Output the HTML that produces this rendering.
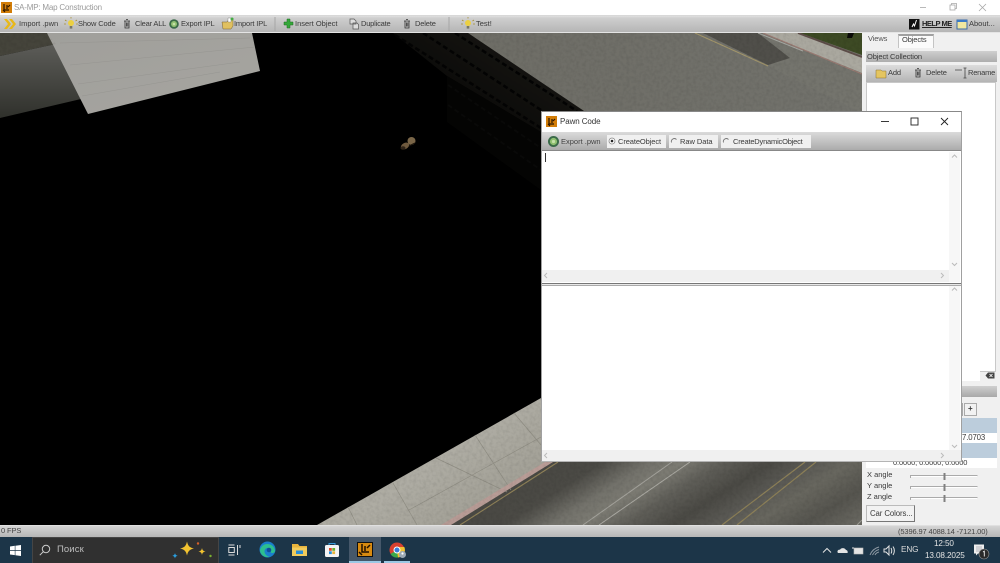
<!DOCTYPE html>
<html><head><meta charset="utf-8"><title>SA-MP: Map Construction</title>
<style>
html,body{margin:0;padding:0;width:1000px;height:563px;overflow:hidden;background:#000}
*{box-sizing:border-box}
body{font-family:"Liberation Sans","DejaVu Sans",sans-serif;font-size:7.5px;color:#333;position:relative}
.a{position:absolute}
.t{position:absolute;white-space:nowrap;line-height:10px;color:#3a3a3a;filter:blur(.3px);letter-spacing:-.13px}
.bar{background:linear-gradient(#e0e0e0 0,#cfcfcf 12%,#b5b5b5 100%)}
svg{position:absolute;overflow:visible;filter:blur(.3px)}
</style></head><body>

<!-- 3D scene -->
<svg style="left:0;top:33px" width="862" height="492" viewBox="0 33 862 492">
<defs>
<linearGradient id="road" gradientUnits="userSpaceOnUse" x1="465" y1="524" x2="579.5" y2="705">
<stop offset="0" stop-color="#4a4944"/><stop offset=".1" stop-color="#4b4a45"/><stop offset=".22" stop-color="#73726b"/><stop offset=".3" stop-color="#7c7b73"/><stop offset=".4" stop-color="#5f5e58"/><stop offset=".52" stop-color="#4a4944"/><stop offset=".62" stop-color="#5a5954"/><stop offset=".72" stop-color="#68675f"/><stop offset=".85" stop-color="#55544e"/><stop offset="1" stop-color="#6d6c65"/>
</linearGradient>
<linearGradient id="side" gradientUnits="userSpaceOnUse" x1="400" y1="400" x2="480" y2="520">
<stop offset="0" stop-color="#a8a69c"/><stop offset=".5" stop-color="#aeaca3"/><stop offset="1" stop-color="#a09e94"/>
</linearGradient>
<linearGradient id="sheet" x1="0" y1="0" x2="1" y2="1"><stop offset="0" stop-color="#a09f9b"/><stop offset="1" stop-color="#a6a5a0"/></linearGradient>
<linearGradient id="wall" x1="0" y1="0" x2="0" y2="1"><stop offset="0" stop-color="#5c5c58"/><stop offset="1" stop-color="#2f302b"/></linearGradient>
<linearGradient id="roof" x1="0" y1="0" x2="1" y2="0"><stop offset="0" stop-color="#6e6d66"/><stop offset="1" stop-color="#72726c"/></linearGradient>
<linearGradient id="fac" gradientUnits="userSpaceOnUse" x1="470" y1="33" x2="425" y2="105"><stop offset="0" stop-color="#141310"/><stop offset="1" stop-color="#070706"/></linearGradient>
<filter id="n" x="0" y="0" width="100%" height="100%"><feTurbulence type="fractalNoise" baseFrequency=".3" numOctaves="2" seed="3"/><feColorMatrix values="0 0 0 0 0  0 0 0 0 0  0 0 0 0 0  1.1 0 0 0 -.42"/></filter>
<clipPath id="tex"><polygon points="468,33 862,33 862,115 590,115"/><polygon points="317,525 541,398 541,462 862,462 862,525"/><polygon points="0,33 47,33 56,44 0,56"/></clipPath>
</defs>
<rect x="0" y="33" width="862" height="492" fill="#000"/>
<!-- top-left -->
<polygon points="0,33 47,33 56,44 0,56" fill="#45443b"/>
<polygon points="0,56 56,44 81,99 0,118" fill="url(#wall)"/>
<polygon points="47,33 252,33 260,71 88,114" fill="url(#sheet)"/>
<g stroke="#969591" stroke-width=".5" fill="none"><path d="M60 43 250 38M70 65 255 47M78 84 240 62M82 96 220 72"/></g>
<!-- building facade -->
<polygon points="393,33 468,33 590,113 541,113 541,132 447,76" fill="url(#fac)"/>
<polygon points="447,76 541,132 541,190 447,122" fill="#040403"/>
<g stroke="#030303" stroke-width="2.500" stroke-dasharray="5 3" fill="none">
<path d="M455 33 577 111"/><path d="M423 33 541 110"/><path d="M395 35 541 128"/>
</g>
<g stroke="#090908" stroke-width="2" stroke-dasharray="5 3" fill="none"><path d="M448 85 541 148"/><path d="M448 105 541 170"/></g>
<!-- roof -->
<polygon points="468,33 862,33 862,115 590,115" fill="url(#roof)"/>
<polygon points="758,33 763,33 862,73 862,113 768,66" fill="#74746d"/>
<polygon points="703,33 758,33 790,58 768,65" fill="#504f4a"/>
<path d="M695 33 768 66" stroke="#a3966a" stroke-width="1" fill="none"/>
<path d="M758 33 803 51" stroke="#a6a6a0" stroke-width="1" fill="none"/>
<polygon points="763,33 798,33 862,56 862,73" fill="#aaa89f"/>
<path d="M763 33 862 74" stroke="#9a7a72" stroke-width="1.200"/>
<polygon points="800,33 862,33 862,55" fill="#3d4a24"/>
<path d="M798 33 862 57" stroke="#5d4d48" stroke-width="2"/>
<polygon points="848,33 854,33 852,38 847,38" fill="#0b0b08"/>
<!-- object -->
<g><ellipse cx="405" cy="146" rx="4.500" ry="3" fill="#6f5a3e" transform="rotate(-30 405 146)"/><ellipse cx="411.500" cy="141" rx="4" ry="4" fill="#7a6648"/><ellipse cx="403" cy="148" rx="2.500" ry="1.800" fill="#2f2418"/><path d="M409 146l6-3" stroke="#1a140c" stroke-width="1"/></g>
<!-- road -->
<polygon points="450,525 862,525 862,400 541,400 541,462 551,462" fill="url(#road)"/>
<polygon points="541,398 551,398 551,462 450,525 317,525" fill="url(#side)"/>
<g stroke="#8f8d83" stroke-width=".7" fill="none"><path d="M348 507 357,525M393 483 417 525M436 458 507 492M475 435 511 490M514 413 541 445M409 510 541 437"/></g>
<polygon points="441,525 451,525 553,462 545,462" fill="#b89c96"/>
<path d="M460 525 558 462" stroke="#8f8158" stroke-width="1.100"/>
<path d="M583 525 672 462" stroke="#a4a39c" stroke-width="1"/>
<path d="M599 525 690 462" stroke="#aaa9a2" stroke-width="1"/>
<path d="M722 525 805 462" stroke="#8d8058" stroke-width="1.200"/>
<path d="M737 525 816 462" stroke="#8d8058" stroke-width="1.200"/>
<path d="M857 525 862 520" stroke="#9c9b94" stroke-width="1"/>
<g clip-path="url(#tex)"><rect x="0" y="33" width="862" height="492" filter="url(#n)" opacity=".13"/></g>
</svg>

<!-- title bar -->
<div class="a" style="left:0;top:0;width:1000px;height:15px;background:#fff"></div>
<svg style="left:1px;top:2px" width="11" height="11" viewBox="0 0 11 11"><rect width="11" height="11" fill="#d27d08"/><path d="M3 2v6h5M6 3v4M2 8l2 2M7 5l2-2" stroke="#2a1500" stroke-width="1.200" fill="none"/></svg>
<div class="t" style="left:14px;top:3px;font-size:8px;color:#9a9a9a;letter-spacing:-.2px">SA-MP: Map Construction</div>
<svg style="left:920px;top:0" width="80" height="15" viewBox="0 0 80 15" fill="none" stroke="#a8a8a8" stroke-width=".8"><path d="M0 7.500h6"/><rect x="30" y="5" width="5" height="5"/><path d="M31.500 5V3.500h5v5H35"/><path d="M59 4l7 7M66 4l-7 7"/></svg>

<!-- main toolbar -->
<div class="a bar" style="left:0;top:15px;width:1000px;height:18px;border-top:1px solid #d8d8d8;border-bottom:1px solid #e4e4e4"></div>
<svg style="left:0;top:16px" width="520" height="16" viewBox="0 0 520 16">
<path d="M4 3l4 5-4 5h3l4-5-4-5zM9 3l4 5-4 5h3l4-5-4-5z" fill="#e8b818"/>
<circle cx="71" cy="7" r="3" fill="#ecd040"/><rect x="69.700" y="10" width="2.600" height="2.600" fill="#776"/><path d="M65 4l1.500 1M77 4l-1.500 1M64 8h2M76 8h2M71 1v1.500" stroke="#a89030" stroke-width=".8"/>
<g fill="none" stroke="#333" stroke-width=".8"><path d="M124 5h6M125 5v7h4V5M126 3.500h2M126.400 6.500v4M127.800 6.500v4"/></g>
<circle cx="174" cy="8" r="4.800" fill="#3a6a48"/><circle cx="174" cy="8" r="3" fill="#8fc070"/><circle cx="174" cy="8" r="1.300" fill="#c4e0a8"/>
<path d="M222 6h5l1-1.500h3l2-2.500v8l-2 3h-8z" fill="#e0c060" stroke="#776030" stroke-width=".5"/><path d="M228 2h3v4h-3z" fill="#fff" stroke="#777" stroke-width=".4"/><circle cx="232" cy="3" r="1.500" fill="#4a4"/>
<rect x="274.500" y="1" width="1" height="14" fill="#a6a6a6"/>
<path d="M287 3h3v3h3v3h-3v3h-3V9h-3V6h3z" fill="#35a83a" stroke="#1e6a20" stroke-width=".5"/>
<path d="M350 3h4l2 2v3h-6z M353 7h4l1.500 1.500V13H353z" fill="#ddd" stroke="#555" stroke-width=".7"/>
<g fill="none" stroke="#333" stroke-width=".8"><path d="M404 5h6M405 5v7h4V5M406 3.500h2M406.400 6.500v4M407.800 6.500v4"/></g>
<rect x="448.500" y="1" width="1" height="14" fill="#a6a6a6"/>
<circle cx="468" cy="7" r="3" fill="#ecd040"/><rect x="466.700" y="10" width="2.600" height="2.600" fill="#776"/><path d="M462 4l1.500 1M474 4l-1.500 1M461 8h2M473 8h2M468 1v1.500" stroke="#a89030" stroke-width=".8"/>
</svg>
<div class="t" style="left:19px;top:19px;letter-spacing:0">Import .pwn</div>
<div class="t" style="left:78px;top:19px">Show Code</div>
<div class="t" style="left:135px;top:19px;letter-spacing:-.2px">Clear ALL</div>
<div class="t" style="left:181px;top:19px;letter-spacing:-.15px">Export IPL</div>
<div class="t" style="left:234px;top:19px;letter-spacing:-.15px">Import IPL</div>
<div class="t" style="left:295px;top:19px;letter-spacing:0">Insert Object</div>
<div class="t" style="left:361px;top:19px;letter-spacing:-.2px">Duplicate</div>
<div class="t" style="left:415px;top:19px;letter-spacing:-.15px">Delete</div>
<div class="t" style="left:476px;top:19px;letter-spacing:0">Test!</div>
<svg style="left:909px;top:18px" width="60" height="13" viewBox="0 0 60 13"><rect x="0" y="1" width="10.500" height="10.500" fill="#111"/><path d="M3 9l1.500-3 1 2 2-6" stroke="#fff" stroke-width="1" fill="none"/><rect x="48" y="2" width="10" height="9" fill="#f0e8a0" stroke="#3a6aa8"/><rect x="48" y="2" width="10" height="2" fill="#3a7ac8"/></svg>
<div class="t" style="left:922px;top:19px;font-weight:bold;text-decoration:underline;color:#222;letter-spacing:-.5px">HELP ME</div>
<div class="t" style="left:969px;top:19px;letter-spacing:0">About...</div>

<!-- right panel -->
<div class="a" style="left:862px;top:33px;width:138px;height:492px;background:#f0f0f0"></div>
<div class="t" style="left:868px;top:34px;color:#555">Views</div>
<div class="a" style="left:898px;top:34px;width:36px;height:14px;background:#fbfbfb;border:1px solid #c4c4c4;border-top:2px solid #a0a0a0;border-bottom:0"></div>
<div class="t" style="left:902px;top:35px">Objects</div>
<div class="a" style="left:866px;top:51px;width:131px;height:11px;background:linear-gradient(#cfcfcf,#adadad)"></div>
<div class="t" style="left:867px;top:52px;letter-spacing:-.1px">Object Collection</div>
<div class="a" style="left:866px;top:65px;width:131px;height:17px;background:linear-gradient(#dcdcdc,#b4b4b4)"></div>
<svg style="left:875px;top:67px" width="115" height="13" viewBox="0 0 115 13"><path d="M1 3h5l1 1h4v7H1z" fill="#e4c560" stroke="#8a7030" stroke-width=".5"/><g fill="none" stroke="#333" stroke-width=".8"><path d="M40 3h6M41 3v7h4V3M42 1.500h2M42.400 4.500v4M43.800 4.500v4"/></g><path d="M80 3h7M90 1v10M88.500 1h3M88.500 11h3" stroke="#444" stroke-width=".8" fill="none"/></svg>
<div class="t" style="left:888px;top:68px">Add</div>
<div class="t" style="left:926px;top:68px;letter-spacing:-.15px">Delete</div>
<div class="t" style="left:968px;top:68px;letter-spacing:-.2px">Rename</div>
<div class="a" style="left:866px;top:82px;width:130px;height:290px;background:#fff;border:1px solid #c8c8c8"></div>
<div class="a" style="left:866px;top:370px;width:114px;height:11px;background:#fff"></div>
<svg style="left:985px;top:372px" width="10" height="7" viewBox="0 0 10 7"><path d="M3 .5h6.500v6H3L.5 3.500z" fill="#444"/><path d="M4.500 2l3 3M7.500 2l-3 3" stroke="#fff" stroke-width=".8"/></svg>
<div class="a" style="left:866px;top:386px;width:131px;height:11px;background:linear-gradient(#cfcfcf,#a8a8a8)"></div>
<div class="a" style="left:950px;top:403px;width:13px;height:13px;background:#e4e4e4;border:1px solid #aaa"></div>
<div class="a" style="left:964px;top:403px;width:13px;height:13px;background:#f2f2f2;border:1px solid #aaa"></div>
<div class="t" style="left:968px;top:404px;font-weight:bold;font-size:8px">+</div>
<div class="a" style="left:866px;top:418px;width:131px;height:15px;background:#bccddc"></div>
<div class="a" style="left:866px;top:433px;width:131px;height:10px;background:#fff"></div>
<div class="a" style="left:866px;top:443px;width:131px;height:15px;background:#bccddc"></div>
<div class="a" style="left:866px;top:458px;width:131px;height:10px;background:#fff"></div>
<div class="t" style="left:962px;top:433px;font-size:7.800px">7.0703</div>
<div class="t" style="left:893px;top:458px;font-size:7.500px">0.0000, 0.0000, 0.0000</div>
<div class="t" style="left:867px;top:470px;letter-spacing:0">X angle</div>
<div class="t" style="left:867px;top:481px;letter-spacing:0">Y angle</div>
<div class="t" style="left:867px;top:492px;letter-spacing:0">Z angle</div>
<svg style="left:910px;top:472px" width="68" height="32" viewBox="0 0 68 32" fill="none"><g stroke="#aaa" stroke-width="1"><path d="M.5 6V3.500h67M.5 17v-2.500h67M.5 28v-2.500h67"/></g><path d="M1 4.500h66M1 15.500h66M1 26.500h66" stroke="#fff"/><g stroke="#808080" stroke-width="2"><path d="M34.500 1v7M34.500 12v7M34.500 23v7"/></g></svg>
<div class="a" style="left:866px;top:505px;width:49px;height:17px;background:#f2f2f2;border:1px solid #bbb;border-bottom-color:#777;border-right-color:#777"></div>
<div class="t" style="left:870px;top:509px;font-size:7.800px;letter-spacing:-.1px">Car Colors...</div>

<!-- status bar -->
<div class="a" style="left:0;top:525px;width:1000px;height:12px;background:linear-gradient(#d4d4d4,#b6b6b6);border-top:1px solid #e0e0e0"></div>
<div class="t" style="left:1px;top:526px;color:#444">0 FPS</div>
<div class="t" style="left:898px;top:527px;color:#444">(5396.97 4088.14 -7121.00)</div>

<!-- dialog -->
<div class="a" style="left:541px;top:111px;width:421px;height:351px;background:#fff;border:1px solid #a0a0a0;border-top-color:#888;border-bottom-color:#b4b4b4"></div>
<svg style="left:546px;top:116px" width="11" height="11" viewBox="0 0 11 11"><rect width="11" height="11" fill="#d27d08"/><path d="M3 2v6h5M6 3v4M2 8l2 2M7 5l2-2" stroke="#2a1500" stroke-width="1.200" fill="none"/></svg>
<div class="t" style="left:560px;top:117px;font-size:8px;color:#333;letter-spacing:-.1px">Pawn Code</div>
<svg style="left:875px;top:115px" width="80" height="14" viewBox="0 0 80 14" fill="none" stroke="#222" stroke-width=".9"><path d="M6 6.500h8"/><rect x="36" y="3" width="7" height="7"/><path d="M66 3l7 7M73 3l-7 7"/></svg>
<div class="a" style="left:542px;top:132px;width:419px;height:19px;background:linear-gradient(#dadada,#ababab);border-bottom:1px solid #888"></div>
<svg style="left:547px;top:135px" width="13" height="13" viewBox="0 0 13 13"><circle cx="6.500" cy="6.500" r="5.500" fill="#3a6a48"/><circle cx="6.500" cy="6.500" r="3.600" fill="#8fc070"/><circle cx="6.500" cy="6.500" r="1.600" fill="#c4e0a8"/></svg>
<div class="t" style="left:561px;top:137px;color:#444;letter-spacing:0">Export .pwn</div>
<div class="a" style="left:607px;top:135px;width:59px;height:13px;background:#f0f0f0"></div>
<div class="a" style="left:669px;top:135px;width:49px;height:13px;background:#f0f0f0"></div>
<div class="a" style="left:721px;top:135px;width:90px;height:13px;background:#f0f0f0"></div>
<svg style="left:607px;top:135px" width="130" height="13" viewBox="0 0 130 13" fill="none"><circle cx="5" cy="6" r="3" fill="#fff" stroke="#888" stroke-width=".8"/><circle cx="5" cy="6" r="1.300" fill="#222"/><path d="M64.500 7.500a3 3 0 0 1 5-3M116.500 7.500a3 3 0 0 1 5-3" stroke="#777" stroke-width=".9"/></svg>
<div class="t" style="left:618px;top:137px;letter-spacing:-.1px">CreateObject</div>
<div class="t" style="left:680px;top:137px;letter-spacing:-.05px">Raw Data</div>
<div class="t" style="left:733px;top:137px;letter-spacing:-.2px">CreateDynamicObject</div>
<div class="a" style="left:545px;top:153px;width:1px;height:9px;background:#333"></div>
<div class="a" style="left:542px;top:270px;width:407px;height:12px;background:#f0f0f0"></div>
<div class="a" style="left:949px;top:152px;width:11px;height:130px;background:#f7f7f7"></div>
<div class="a" style="left:542px;top:283px;width:419px;height:3px;background:#e8e8e8;border-top:1px solid #777;border-bottom:1px solid #aaa"></div>
<div class="a" style="left:949px;top:286px;width:11px;height:164px;background:#f7f7f7"></div>
<div class="a" style="left:542px;top:450px;width:419px;height:11px;background:#f0f0f0"></div>
<svg style="left:542px;top:152px" width="420" height="310" viewBox="0 0 420 310" fill="none" stroke="#bbb" stroke-width="1"><path d="M410 5.500l2.500-2.500 2.500 2.500M410 111l2.500 2.500 2.500-2.500M5 121l-2.500 2.500 2.500 2.500M399 121l2.500 2.500-2.500 2.500M410 138.500l2.500-2.500 2.500 2.500M410 293l2.500 2.500 2.500-2.500M5 301l-2.500 2.500 2.500 2.500M399 301l2.500 2.500-2.500 2.500"/></svg>

<!-- taskbar -->
<div class="a" style="left:0;top:537px;width:1000px;height:26px;background:#1c3548"></div>
<svg style="left:10px;top:545px" width="11" height="11" viewBox="0 0 11 11" fill="#fff"><path d="M0 1.500 4.800.8v4.200H0zM5.400.7 11 0v5H5.400zM0 5.700h4.800v4.400L0 9.500zM5.400 5.700H11V11l-5.600-.8z"/></svg>
<div class="a" style="left:32px;top:537px;width:187px;height:26px;background:#303030;border:1px solid #454545;border-bottom:0"></div>
<svg style="left:39px;top:544px" width="12" height="12" viewBox="0 0 12 12" fill="none" stroke="#ccc" stroke-width="1"><circle cx="7" cy="5" r="3.700"/><path d="M4.300 7.700.8 11.200"/></svg>
<div class="t" style="left:57px;top:545px;font-size:9.500px;color:#bdbdbd;letter-spacing:.1px">Поиск</div>
<svg style="left:170px;top:540px" width="46" height="20" viewBox="0 0 46 20"><path d="M17 1.500c1 4.500 2.500 6 7 7-4.500 1-6 2.500-7 7-1-4.500-2.500-6-7-7 4.500-1 6-2.500 7-7z" fill="#f2c230"/><path d="M32 8c.5 2.300 1.200 3 3.500 3.500-2.300.5-3 1.200-3.500 3.500-.5-2.300-1.200-3-3.500-3.500C30.800 11 31.500 10.300 32 8z" fill="#f2c230"/><path d="M5 13c.4 1.700 1 2.300 2.700 2.700C6 16.100 5.400 16.700 5 18.400c-.4-1.700-1-2.300-2.700-2.700C4 15.300 4.600 14.700 5 13z" fill="#2a9fe0"/><circle cx="28" cy="3.500" r="1.200" fill="#d8602a"/><circle cx="40.500" cy="16" r="1.200" fill="#7ab030"/></svg>
<svg style="left:228px;top:544px" width="13" height="12" viewBox="0 0 13 12" fill="none" stroke="#dcdcdc" stroke-width="1"><path d="M.5 1h6M.5 11h6M.8 3.500h5.500v5H.8zM9.500 1v10M12 1v3"/></svg>
<svg style="left:259px;top:541px" width="17" height="17" viewBox="0 0 17 17"><circle cx="8.500" cy="8.500" r="8" fill="#1a7fcc"/><path d="M1 9c1-4 4-6 7.500-6 3.500 0 7 2.500 7.500 6.500.2 2.500-3 3-4 2-1-1 .5-1.500-.5-3.500-1.500-2-5.500-1.500-6 2-.2 2.500 2 5 5 6-5 1-9.500-2.500-9.500-7z" fill="#2dbf8f"/><circle cx="10" cy="9" r="2.300" fill="#0f4f9a"/></svg>
<svg style="left:292px;top:542px" width="15" height="15" viewBox="0 0 15 15"><path d="M0 2h6l1.500 2H15v10H0z" fill="#e8b43c"/><rect y="5.500" width="15" height="8.500" fill="#f2cc5c"/><rect x="4" y="8.500" width="7" height="3.500" fill="#2a8fd8"/></svg>
<svg style="left:324px;top:541px" width="16" height="17" viewBox="0 0 16 17"><path d="M5 4V2.500h6V4" fill="none" stroke="#3a9ad8"/><rect x="1" y="4" width="14" height="12" rx="1.500" fill="#f4f4f4"/><rect x="5" y="7" width="2.800" height="2.800" fill="#e04a2a"/><rect x="8.300" y="7" width="2.800" height="2.800" fill="#6ab030"/><rect x="5" y="10.300" width="2.800" height="2.800" fill="#2a8fd8"/><rect x="8.300" y="10.300" width="2.800" height="2.800" fill="#e8b43c"/></svg>
<div class="a" style="left:349px;top:537px;width:32px;height:26px;background:#46586a"></div>
<div class="a" style="left:349px;top:561px;width:32px;height:2px;background:#9cc8e4"></div>
<div class="a" style="left:384px;top:561px;width:26px;height:2px;background:#9cc8e4"></div>
<svg style="left:357px;top:542px" width="16" height="15" viewBox="0 0 16 15"><rect width="16" height="15" fill="#101010"/><rect x="1" y="1" width="14" height="13" fill="#d88a10"/><path d="M5 2v8h7M8 4v5M2 10l3 3M10 6l3-3" stroke="#201000" stroke-width="1.500" fill="none"/></svg>
<svg style="left:389px;top:542px" width="18" height="17" viewBox="0 0 18 17"><circle cx="8" cy="8" r="7.500" fill="#d8402f"/><path d="M8 8 1.500 12A7.500 7.500 0 0 0 9 15.500z" fill="#3aa84a"/><path d="M8 8l1 7.500A7.500 7.500 0 0 0 15.300 5H8z" fill="#f2c230"/><circle cx="8" cy="8" r="3" fill="#3a7ad8" stroke="#fff"/><circle cx="13.500" cy="12.500" r="3.500" fill="#9aa8b4"/><circle cx="13.500" cy="11.500" r="1.100" fill="#fff"/></svg>
<svg style="left:822px;top:544px" width="80" height="13" viewBox="0 0 80 13" fill="none" stroke="#e4e4e4" stroke-width="1"><path d="M1 8.500 5 4.500 9 8.500"/><path d="M16 9c-1.500-2 .5-3.800 2-3.300C19 3.500 23 3.500 24 6c1.500 0 2 2 1.500 3z" fill="#e4e4e4" stroke="none"/><rect x="32" y="4" width="9" height="6" fill="#e4e4e4" stroke="#bbb" stroke-width=".6"/><path d="M30 4h2"/><path d="M48 11c2-5 5-7 9-8M50.500 11c1.500-3 3-4.500 6.500-5.500M53 11c.7-1.500 2-2.500 4-3" stroke="#8f9aa4"/><path d="M62 5h2l3-3v9l-3-3h-2zM69 4c1 1.500 1 4 0 5.500M71 2.500c1.800 2.500 1.800 6 0 8.500"/></svg>
<div class="t" style="left:901px;top:545px;font-size:8.200px;color:#dcdcdc">ENG</div>
<div class="t" style="left:934px;top:539px;font-size:8.200px;color:#e4e4e4">12:50</div>
<div class="t" style="left:925px;top:551px;font-size:8.200px;color:#e4e4e4">13.08.2025</div>
<svg style="left:973px;top:544px" width="18" height="16" viewBox="0 0 18 16"><path d="M1 .5h10v9H5L3 11.500V9.500H1z" fill="#eee"/><path d="M3 3h6M3 5h6M3 7h6" stroke="#778" stroke-width=".6"/><circle cx="11" cy="10" r="5" fill="#2a2a2a" stroke="#999" stroke-width=".6"/><path d="M10 8l1.300-.8V12.500" stroke="#eee" stroke-width=".9" fill="none"/></svg>
</body></html>
